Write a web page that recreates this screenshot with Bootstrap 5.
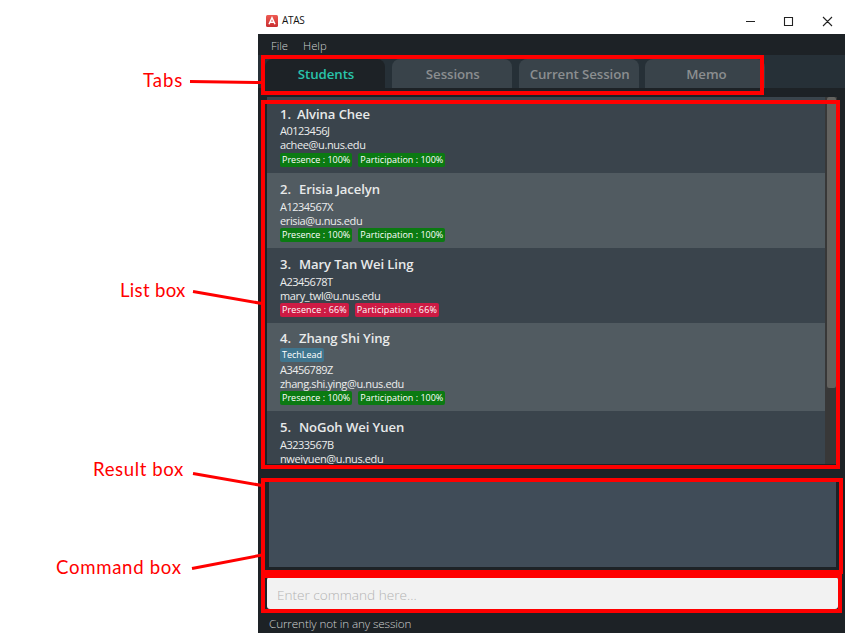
<!DOCTYPE html>
<html lang="en">
<head>
<meta charset="utf-8">
<meta name="viewport" content="width=device-width, initial-scale=1">
<title>ATAS</title>
<link href="https://cdn.jsdelivr.net/npm/bootstrap@5.3.0/dist/css/bootstrap.min.css" rel="stylesheet">
<style>
body{width:856px;height:642px;background:#fff;font-family:"Open Sans","Noto Sans",sans-serif;font-size:12px}
.app{width:587px;height:626px;margin:7px 0 0 258px;background:#1d2226}
.title-strip{height:27px;padding:0 12px 0 8px;color:#111;font-size:10px;letter-spacing:-.3px}
.menu-strip{height:21px;padding:3px 13px 0;gap:15px;color:#d0d2d3;font-size:11.3px;font-weight:300}
.tab-strip{height:33px;background:#263037;padding:4px 0 0 7px;gap:6.8px}
.tab-strip .nav-link{width:120px;height:29px;padding:2px 0 0 2px;border-radius:8px 8px 0 0;background:#39434a;color:#8b8e90;font-weight:600;font-size:13.3px;letter-spacing:-.1px}
.tab-strip .nav-link.active{background:#1d2226;color:#29c3ab}
.list-pane{height:367px;margin:9px 8px 0 9px;background:#383838}
.students{width:558px}
.student{height:75px;padding:7px 0 0 13px;background:#3a444c;color:#eceded;line-height:14px;font-size:11px;letter-spacing:-.38px}
.student:first-child{height:76px;padding-top:8px}
.student:nth-child(even){background:#515b61}
.student.tall{height:88px;padding-top:6px}
.student h2{font-size:13.1px;font-weight:600;line-height:18px;margin:0 0 2px;color:#e8eaea;letter-spacing:-.08px;gap:8px}
.student.tall h2{margin-bottom:1px}
.student:first-child h2{gap:6px;margin-bottom:1px}
.ident{letter-spacing:-.5px}
.tagrow{gap:6px;height:15px;letter-spacing:0}
.student:first-child .tagrow{padding-top:1px}
.tagpill{height:14px;line-height:14px;padding:0 2px;border-radius:2px;background:#0b7a12;color:#fff;font-size:9px;white-space:nowrap}
.tagpill.low{background:#cd1b44;letter-spacing:.12px}
.tagpill.role{background:#3f758e}
.thumb{width:9px;height:291px;margin-left:2px;background:#63625f;border-radius:2px}
.result-pane{height:88px;margin:15px 9px 0 11px;background:#404c58}
.command{height:32px;margin:10px 7px 0 9px;padding:2px 10px 0;background:#f2f2f2;border:0;border-radius:3px;font-size:13.6px;font-weight:300;width:571px}
.command::placeholder{color:#b4b4b4;opacity:1}
.foot{height:24px;padding:5px 11px 0;color:#d0d2d3;font-size:11.7px;font-weight:300;line-height:18px;letter-spacing:-.11px}
.frame{position:absolute;border:4px solid red}
.frame-tabs{left:261px;top:55px;width:503px;height:40px}
.frame-list{left:261px;top:100px;width:579px;height:369px}
.frame-result{left:261px;top:478px;width:582px;height:96px}
.frame-command{left:261px;top:574px;width:581px;height:39px}
.note{position:absolute;color:red;font-family:Lato,sans-serif;font-size:18.6px;line-height:24px;white-space:nowrap;letter-spacing:.6px}
.note-tabs{left:143px;top:68px;letter-spacing:.9px}
.note-list{left:120px;top:278px;letter-spacing:.3px}
.note-result{left:93px;top:457px}
.note-command{left:56px;top:555px;letter-spacing:.7px}
.leaders{position:absolute;left:0;top:0;pointer-events:none}
</style>
</head>
<body class="position-relative overflow-hidden">
<main class="app d-flex flex-column">
  <header class="title-strip d-flex align-items-center bg-white">
    <svg width="12" height="12" viewBox="0 0 12 12" class="me-1"><defs><linearGradient id="g" x2="0" y2="1"><stop stop-color="#ee5a52"/><stop offset="1" stop-color="#c92f31"/></linearGradient></defs><rect width="12" height="12" rx="1.5" fill="url(#g)"/><path d="M3 9.2 6 2.8l3 6.4M4.2 7.3h3.6" fill="none" stroke="#fff" stroke-width="1.5"/></svg>
    <span>ATAS</span>
    <svg class="ms-auto" width="88" height="12" viewBox="0 0 88 12" fill="none" stroke="#222" stroke-width="1.1"><path d="M1 6.5h9M39.5 2.5h8v8h-8zM78 2l9 9M87 2l-9 9"/></svg>
  </header>
  <nav class="menu-strip d-flex align-items-center"><span>File</span><span>Help</span></nav>
  <nav class="tab-strip nav flex-nowrap">
    <a class="nav-link active d-flex align-items-center justify-content-center">Students</a>
    <a class="nav-link d-flex align-items-center justify-content-center">Sessions</a>
    <a class="nav-link d-flex align-items-center justify-content-center">Current Session</a>
    <a class="nav-link d-flex align-items-center justify-content-center">Memo</a>
  </nav>
  <section class="list-pane d-flex overflow-hidden">
    <div class="students flex-shrink-0">
      <article class="student"><h2 class="d-flex"><span>1.</span><span>Alvina Chee</span></h2><div class="ident">A0123456J</div><div>achee@u.nus.edu</div><div class="tagrow d-flex"><span class="tagpill">Presence : 100%</span><span class="tagpill">Participation : 100%</span></div></article>
      <article class="student"><h2 class="d-flex"><span>2.</span><span>Erisia Jacelyn</span></h2><div class="ident">A1234567X</div><div>erisia@u.nus.edu</div><div class="tagrow d-flex"><span class="tagpill">Presence : 100%</span><span class="tagpill">Participation : 100%</span></div></article>
      <article class="student"><h2 class="d-flex"><span>3.</span><span>Mary Tan Wei Ling</span></h2><div class="ident">A2345678T</div><div>mary_twl@u.nus.edu</div><div class="tagrow d-flex"><span class="tagpill low">Presence : 66%</span><span class="tagpill low">Participation : 66%</span></div></article>
      <article class="student tall"><h2 class="d-flex"><span>4.</span><span>Zhang Shi Ying</span></h2><div class="tagrow d-flex"><span class="tagpill role">TechLead</span></div><div class="ident">A3456789Z</div><div>zhang.shi.ying@u.nus.edu</div><div class="tagrow d-flex"><span class="tagpill">Presence : 100%</span><span class="tagpill">Participation : 100%</span></div></article>
      <article class="student"><h2 class="d-flex"><span>5.</span><span>NoGoh Wei Yuen</span></h2><div class="ident">A3233567B</div><div>nweiyuen@u.nus.edu</div></article>
    </div>
    <div class="thumb"></div>
  </section>
  <section class="result-pane"></section>
  <input class="command" placeholder="Enter command here..." aria-label="Command">
  <footer class="foot">Currently not in any session</footer>
</main>
<div class="frame frame-tabs"></div>
<div class="frame frame-list"></div>
<div class="frame frame-result"></div>
<div class="frame frame-command"></div>
<div class="note note-tabs">Tabs</div>
<div class="note note-list">List box</div>
<div class="note note-result">Result box</div>
<div class="note note-command">Command box</div>
<svg class="leaders" width="856" height="642" stroke="red" stroke-width="3"><path d="M190 81.5 262 82.5M193 291.5 262 303.5M193 473.500 262 485.500M192 568.500 262 555"/></svg>
<script src="https://cdn.jsdelivr.net/npm/bootstrap@5.3.0/dist/js/bootstrap.bundle.min.js"></script>
</body>
</html>
